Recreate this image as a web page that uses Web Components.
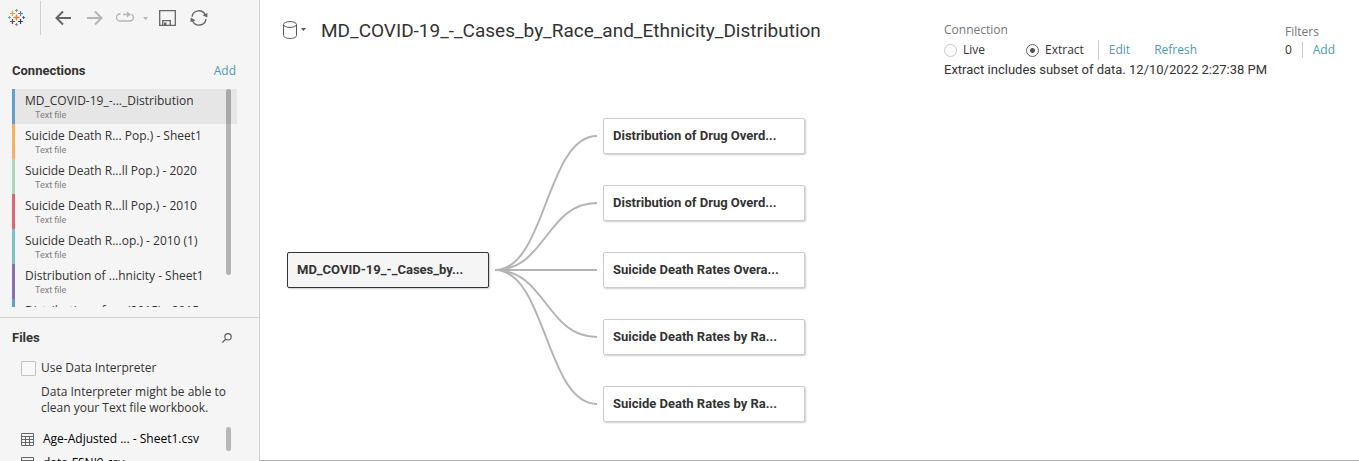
<!DOCTYPE html>
<html lang="en">
<head>
<meta charset="utf-8">
<title>Data Source</title>
<style>
  body { margin: 0; font: 12px/16px "Open Sans", "Liberation Sans", sans-serif; color: #333; background: #fff; }
</style>
</head>
<body>
<data-source-page></data-source-page>

<template id="t-page">
  <style>
    :host { display: flex; height: 100vh; overflow: hidden; --strong: 700 13px/16px Roboto, "Liberation Sans", sans-serif; --status: 13px/16px Roboto, "Liberation Sans", sans-serif; }
    main { flex: 1; min-width: 0; display: flex; flex-direction: column; box-sizing: border-box; border-bottom: 1px solid #b4b4b4; }
    aside { flex: none; width: 260px; box-sizing: border-box; border-right: 1px solid #d0d0d0; background: #f5f5f5; display: flex; flex-direction: column; overflow: hidden; }
    files-panel { flex: 1; min-height: 0; }
  </style>
  <aside>
    <tool-bar></tool-bar>
    <connection-list>
      <connection-item name="MD_COVID-19_-..._Distribution" color="#5fa2c6" selected></connection-item>
      <connection-item name="Suicide Death R... Pop.) - Sheet1" color="#fab063"></connection-item>
      <connection-item name="Suicide Death R...ll Pop.) - 2020" color="#a9dabb"></connection-item>
      <connection-item name="Suicide Death R...ll Pop.) - 2010" color="#dc676c"></connection-item>
      <connection-item name="Suicide Death R...op.) - 2010 (1)" color="#77c4c9"></connection-item>
      <connection-item name="Distribution of ...hnicity - Sheet1" color="#8672ac"></connection-item>
      <connection-item name="Distribution of ...s (2015) - 2015" color="#5fa2c6"></connection-item>
    </connection-list>
    <files-panel>
      <file-item>Age-Adjusted ... - Sheet1.csv</file-item>
      <file-item>data-FSNJ9.csv</file-item>
    </files-panel>
  </aside>
  <main>
    <source-header>MD_COVID-19_-_Cases_by_Race_and_Ethnicity_Distribution</source-header>
    <relation-canvas>
      <table-node slot="root" root>MD_COVID-19_-_Cases_by...</table-node>
      <table-node>Distribution of Drug Overd...</table-node>
      <table-node>Distribution of Drug Overd...</table-node>
      <table-node>Suicide Death Rates Overa...</table-node>
      <table-node>Suicide Death Rates by Ra...</table-node>
      <table-node>Suicide Death Rates by Ra...</table-node>
    </relation-canvas>
  </main>
</template>

<template id="t-toolbar">
  <style>
    :host { display: flex; height: 36px; align-items: center; }
    button { border: 0; padding: 0; margin: 0; background: none; height: 20px; display: block; }
    svg { display: block; }
    .logo { margin: 0 15px 0 8px; }
    .rule { width: 1px; height: 34px; background: #d0d0d0; margin-right: 14px; }
    .fwd { margin-left: 16px; }
    .replay { margin-left: 12px; }
    .menu { margin-left: 8px; }
    .save { margin-left: 11px; }
    .refresh { margin-left: 14px; }
  </style>
  <svg class="logo" width="17" height="20" viewBox="0 0 17 20" fill="none" aria-label="Logo">
    <path d="M8.500 6.500v6M5.500 9.500h6" stroke="#ea7a34" stroke-width="1.300"/>
    <path d="M4.500 3v5M2 5.500h5" stroke="#e9a03c" stroke-width="1.200"/>
    <path d="M12.500 3v5M10 5.500h5" stroke="#5b8793" stroke-width="1.200"/>
    <path d="M4.500 11v5M2 13.500h5" stroke="#c42440" stroke-width="1.200"/>
    <path d="M12.500 11v5M10 13.500h5" stroke="#20427a" stroke-width="1.200"/>
    <path d="M8.500 1v3M7 2.500h3" stroke="#7799a6"/>
    <path d="M8.500 15v3M7 16.500h3" stroke="#8187ad"/>
    <path d="M1.500 8v3M0 9.500h3" stroke="#7b9faa"/>
    <path d="M15.500 8v3M14 9.500h3" stroke="#55668f"/>
  </svg>
  <span class="rule"></span>
  <button aria-label="Back"><svg width="16" height="20" viewBox="0 0 16 20" fill="none" stroke="#666" stroke-width="2"><path d="M16 10H2M8 3.500L1.500 10L8 16.500"/></svg></button>
  <button class="fwd" aria-label="Forward"><svg width="16" height="20" viewBox="0 0 16 20" fill="none" stroke="#b5b5b5" stroke-width="2"><path d="M0 10h14M8 3.500L14.500 10L8 16.500"/></svg></button>
  <button class="replay" aria-label="Replay"><svg width="20" height="20" viewBox="0 0 20 20"><path d="M5.500 6H5a3.500 3.500 0 0 0 0 7h10a3.500 3.500 0 0 0 1.500-6.600M8 6.500h6" fill="none" stroke="#b5b5b5" stroke-width="1.300"/><path d="M12 3.500l4 3l-4 3z" fill="#b5b5b5"/></svg></button>
  <button class="menu" aria-label="Replay options"><svg width="5" height="20" viewBox="0 0 5 20"><path d="M0 9h5l-2.500 3z" fill="#b5b5b5"/></svg></button>
  <button class="save" aria-label="Save"><svg width="17" height="20" viewBox="0 0 17 20"><path d="M.7 2.700h15.600v14.600H.7zM3.700 17v-4.300h7.600V17" fill="none" stroke="#666" stroke-width="1.300"/><path d="M5 14.500h2.500V17H5z" fill="#666"/></svg></button>
  <button class="refresh" aria-label="Refresh"><svg width="18" height="20" viewBox="0 0 18 20"><path d="M2 8.600A7 7 0 0 1 15.300 7M16 11.200A7 7 0 0 1 2.700 13" fill="none" stroke="#666" stroke-width="1.400"/><path d="M12.500 7.300l5-2.200l-.2 4.500zM5.500 12.500l-5.200 1.500l.5-4.500z" fill="#666"/></svg></button>
</template>

<template id="t-connections">
  <style>
    :host { display: block; padding: 27px 22px 10px 12px; border-bottom: 1px solid #d0d0d0; }
    header { display: flex; justify-content: space-between; height: 16px; margin-bottom: 10px; }
    h2 { margin: 0; font: var(--strong); }
    a { color: #4e9bb4; text-decoration: none; margin-right: 1px; }
    .list { position: relative; height: 218px; overflow: hidden; }
    .thumb { position: absolute; top: 0; right: 6px; width: 5px; height: 186px; border-radius: 3px; background: #0004; }
  </style>
  <header><h2>Connections</h2><a href="#add-connection">Add</a></header>
  <div class="list"><slot></slot><span class="thumb"></span></div>
</template>

<template id="t-connection">
  <style>
    :host { display: block; height: 35px; box-sizing: border-box; border-left: 3px solid var(--tint); padding: 4px 0 0 10px; white-space: nowrap; }
    :host([selected]) { background: #e6e6e6; }
    .kind { padding-left: 10px; font: 9px/12px Roboto, "Liberation Sans", sans-serif; color: #808080; }
  </style>
  <div class="name"></div>
  <div class="kind">Text file</div>
</template>

<template id="t-files">
  <style>
    :host { display: block; padding: 12px 22px 0 12px; overflow: hidden; }
    header { display: flex; justify-content: space-between; align-items: center; height: 16px; padding-right: 5px; }
    h2 { margin: 0; font: var(--strong); }
    button { border: 0; padding: 0; background: none; }
    svg { display: block; }
    label { display: flex; align-items: center; gap: 5px; margin: 14px 0 8px 9px; }
    input { appearance: none; margin: 0; width: 15px; height: 15px; box-sizing: border-box; border: 1px solid #c4c4c4; border-radius: 1px; background: #f8f8f8; }
    p { margin: 0 0 11px 29px; }
    .list { position: relative; }
    .thumb { position: absolute; top: 0; right: 6px; width: 5px; height: 24px; border-radius: 3px; background: #b7b7b7; }
  </style>
  <header><h2>Files</h2><button aria-label="Search files"><svg width="10" height="10" viewBox="0 0 10 10" fill="none" stroke="#555" stroke-width="1.100"><circle cx="6" cy="3.800" r="3.200"/><path d="M3.700 6.200L.4 9.500"/></svg></button></header>
  <label><input type="checkbox">Use Data Interpreter</label>
  <p>Data Interpreter might be able to<br>clean your Text file workbook.</p>
  <div class="list"><slot></slot><span class="thumb"></span></div>
</template>

<template id="t-file">
  <style>
    :host { display: flex; align-items: center; gap: 9px; height: 24px; padding-left: 9px; color: #000; white-space: nowrap; }
  </style>
  <svg width="13" height="13" viewBox="0 0 13 13" fill="none" stroke="#666"><path d="M.5.5h12v12H.5zM0 3.500h13M0 6.500h13M0 9.500h13M4.500 3v10M8.500 3v10"/></svg>
  <slot></slot>
</template>

<template id="t-header">
  <style>
    :host { display: flex; height: 78px; padding: 0 24px 0 23px; flex: none; }
    .source { border: 0; background: none; padding: 0; margin: 20px 15px 0 0; height: 20px; display: flex; align-items: center; gap: 4px; }
    svg { display: block; }
    h1 { flex: 1; min-width: 0; margin: 18px 0 0; font: 19px/26px Roboto, "Liberation Sans", sans-serif; white-space: nowrap; overflow: hidden; }
    .connection { width: 341px; margin-top: 22px; white-space: nowrap; }
    .caption { color: #777; height: 18px; }
    .row { display: flex; align-items: center; height: 20px; }
    .status { font: var(--status); }
    label { display: flex; align-items: center; gap: 6px; }
    label.live { width: 82px; }
    input { appearance: none; margin: 0; width: 13px; height: 13px; box-sizing: border-box; border: 1px solid #c8c8c8; border-radius: 50%; background: #fff; }
    input:checked { border-color: #666; background: radial-gradient(circle, #555 2px, #fff 3px); }
    .rule { width: 1px; height: 20px; background: #ccc; }
    .connection .rule { margin: 0 10px 0 14px; }
    a { color: #4e9bb4; text-decoration: none; }
    .refresh { margin-left: 24px; }
    .filters { margin-top: 24px; width: 50px; }
    .filters .caption { height: 16px; }
    .filters .rule { height: 16px; margin: 0 10px; }
  </style>
  <button class="source" aria-label="Data source menu">
    <svg width="14" height="18" viewBox="0 0 14 18" fill="none" stroke="#555"><path d="M.5 3.500v11c0 1.700 2.900 3 6.500 3s6.500-1.300 6.500-3v-11"/><ellipse cx="7" cy="3.500" rx="6.500" ry="2.900"/></svg>
    <svg width="5" height="4" viewBox="0 0 5 4"><path d="M0 0h5L2.500 3z" fill="#555"/></svg>
  </button>
  <h1><slot></slot></h1>
  <section class="connection">
    <div class="caption">Connection</div>
    <div class="row">
      <label class="live"><input type="radio" name="mode">Live</label>
      <label><input type="radio" name="mode" checked>Extract</label>
      <span class="rule"></span>
      <a href="#edit">Edit</a><a class="refresh" href="#refresh">Refresh</a>
    </div>
    <div class="row status">Extract includes subset of data. 12/10/2022 2:27:38 PM</div>
  </section>
  <section class="filters">
    <div class="caption">Filters</div>
    <div class="row"><span>0</span><span class="rule"></span><a href="#add-filter">Add</a></div>
  </section>
</template>

<template id="t-canvas">
  <style>
    :host { display: flex; align-items: center; align-self: flex-start; padding: 40px 27px; }
    svg { display: block; margin: 0 6px; }
    .children { display: flex; flex-direction: column; gap: 31px; }
  </style>
  <slot name="root"></slot>
  <svg width="102" height="304" viewBox="0 0 102 304" fill="none" stroke="#b4b4b4" stroke-width="2">
    <path d="M0 152C51 152 51 18 102 18M0 152C51 152 51 85 102 85M0 152H102M0 152C51 152 51 219 102 219M0 152C51 152 51 286 102 286"/>
  </svg>
  <div class="children"><slot></slot></div>
</template>

<template id="t-node">
  <style>
    :host { display: block; width: 202px; height: 36px; box-sizing: border-box; padding: 9px; border: 1px solid #ccc; border-radius: 2px; background: #fff; box-shadow: 1px 1px 2px #0003; font: var(--strong); white-space: nowrap; }
    :host([root]) { background: #f5f5f5; border-color: #333; }
  </style>
  <slot></slot>
</template>

<script>
  class Base extends HTMLElement {
    constructor() {
      super();
      this.attachShadow({ mode: 'open' })
        .append(document.getElementById(this.constructor.template).content.cloneNode(true));
    }
  }
  class ConnectionItem extends Base {
    static template = 't-connection';
    connectedCallback() {
      this.shadowRoot.querySelector('.name').textContent = this.getAttribute('name');
      this.style.setProperty('--tint', this.getAttribute('color'));
    }
  }
  customElements.define('tool-bar', class extends Base { static template = 't-toolbar'; });
  customElements.define('connection-list', class extends Base { static template = 't-connections'; });
  customElements.define('connection-item', ConnectionItem);
  customElements.define('files-panel', class extends Base { static template = 't-files'; });
  customElements.define('file-item', class extends Base { static template = 't-file'; });
  customElements.define('source-header', class extends Base { static template = 't-header'; });
  customElements.define('relation-canvas', class extends Base { static template = 't-canvas'; });
  customElements.define('table-node', class extends Base { static template = 't-node'; });
  customElements.define('data-source-page', class extends Base { static template = 't-page'; });
</script>
</body>
</html>
